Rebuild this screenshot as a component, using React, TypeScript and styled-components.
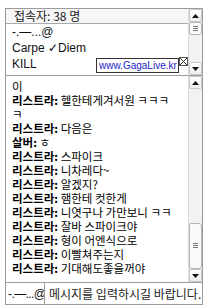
import styled, { createGlobalStyle } from 'styled-components';

const GlobalStyle = createGlobalStyle`
  html, body {
    margin: 0;
    padding: 0;
    background: #ffffff;
  }
  body {
    font-family: 'Noto Sans CJK KR', 'Liberation Sans', sans-serif;
    color: #000;
  }
`;

const Frame = styled.div`
  width: 198px;
  margin: 8px 0 0 5px;
  display: flex;
  flex-direction: column;
`;

const Panel = styled.div<{ $height: number }>`
  position: relative;
  height: ${p => p.$height}px;
  border: 1px solid #9c9c9c;
  display: grid;
  grid-template-columns: 1fr 14px;
  box-sizing: border-box;
  & + & {
    border-top: none;
  }
`;

const UserList = styled.div`
  display: flex;
  flex-direction: column;
  overflow: hidden;
`;

const ListHeader = styled.div`
  height: 14px;
  line-height: 14px;
  padding-left: 8px;
  font-size: 12px;
  color: #222;
  white-space: nowrap;
  background: #f6f6f6;
  border-bottom: 1px solid #a8a8a8;
`;

const UserItem = styled.div`
  height: 16px;
  line-height: 16px;
  padding-left: 6px;
  font-family: 'Liberation Sans', sans-serif;
  font-size: 12px;
  color: #111;
  white-space: nowrap;
  &:first-of-type {
    margin-top: 1px;
    letter-spacing: -0.6px;
  }
`;

const Tooltip = styled.div`
  position: absolute;
  left: 90px;
  top: 49px;
  height: 13px;
  padding: 0 1px 0 2px;
  border: 1px solid #333;
  background: #fff;
  font-family: 'Liberation Sans', sans-serif;
  font-size: 10px;
  line-height: 13px;
  color: #1e1ec8;
  white-space: nowrap;
`;

const CloseBox = styled.span`
  position: absolute;
  right: -10px;
  top: -2px;
  width: 7px;
  height: 7px;
  border: 1px solid #555;
  background: #fff;
  svg {
    display: block;
  }
`;

const ScrollBar = styled.div`
  display: flex;
  flex-direction: column;
  background: #f2f2f0;
  border-left: 1px solid #dcdcdc;
`;

const ArrowButton = styled.div`
  height: 13px;
  flex: none;
  box-sizing: border-box;
  border: 1px solid #c8c8c8;
  border-radius: 2px;
  background: linear-gradient(#ffffff, #eeeeee);
  display: flex;
  align-items: center;
  justify-content: center;
`;

const Thumb = styled.div<{ $height: number }>`
  height: ${p => p.$height}px;
  flex: none;
  box-sizing: border-box;
  border: 1px solid #b4b4b4;
  border-radius: 2px 3px 3px 2px;
  background: #fafafa;
  display: flex;
  align-items: center;
  justify-content: center;
`;

const Track = styled.div`
  flex: 1;
`;

const Grip = styled.div`
  width: 5px;
  height: 6px;
  background: repeating-linear-gradient(#7c7c7c 0 1px, transparent 1px 2px);
`;

const ChatLog = styled.div`
  padding: 3px 0 0 6px;
  font-size: 11.5px;
  line-height: 14px;
  overflow: hidden;
`;

const ChatLine = styled.div`
  white-space: nowrap;
`;

const Name = styled.b`
  font-weight: 700;
`;

const InputBar = styled.div`
  height: 22px;
  border: 1px solid #9c9c9c;
  border-top: none;
  display: flex;
  align-items: center;
  box-sizing: border-box;
`;

const NickField = styled.div`
  width: 36px;
  flex: none;
  padding-left: 2px;
  font-family: 'Liberation Sans', sans-serif;
  font-size: 12px;
  letter-spacing: -0.6px;
  color: #111;
  white-space: nowrap;
  overflow: hidden;
  border-right: 1px solid #9c9c9c;
  height: 100%;
  display: flex;
  align-items: center;
`;

const MessageField = styled.div`
  padding-left: 4px;
  font-size: 12px;
  color: #222;
  white-space: nowrap;
  overflow: hidden;
`;

const Arrow = ({ up }: { up?: boolean }) => (
  <svg width="7" height="4" viewBox="0 0 7 4">
    <path d={up ? 'M0 4 L3.5 0 L7 4 Z' : 'M0 0 L3.5 4 L7 0 Z'} fill="#111" />
  </svg>
);

const Scroll = ({ thumb, top }: { thumb: number; top: boolean }) => (
  <ScrollBar>
    <ArrowButton>
      <Arrow up />
    </ArrowButton>
    {top ? (
      <>
        <Thumb $height={thumb}>
          <Grip />
        </Thumb>
        <Track />
      </>
    ) : (
      <>
        <Track />
        <Thumb $height={thumb}>
          <Grip />
        </Thumb>
      </>
    )}
    <ArrowButton>
      <Arrow />
    </ArrowButton>
  </ScrollBar>
);

const users = ['-.—...@', 'Carpe ✓Diem', 'KILL'];

const chat: [string, string][] = [
  ['', '이'],
  ['리스트라:', '헬한테게겨서원 ㅋㅋㅋ'],
  ['', 'ㅋ'],
  ['리스트라:', '다음은'],
  ['살버:', 'ㅎ'],
  ['리스트라:', '스파이크'],
  ['리스트라:', '니차레다~'],
  ['리스트라:', '알겠지?'],
  ['리스트라:', '햄한테 컷한게'],
  ['리스트라:', '니엿구나 가만보니 ㅋㅋ'],
  ['리스트라:', '잘바 스파이크야'],
  ['리스트라:', '형이 어엔식으로'],
  ['리스트라:', '이빨쳐주는지'],
  ['리스트라:', '기대해도좋을꺼야'],
];

export default function App() {
  return (
    <>
      <GlobalStyle />
      <Frame>
        <Panel $height={68}>
          <UserList>
            <ListHeader>접속자: 38 명</ListHeader>
            {users.map(u => (
              <UserItem key={u}>{u}</UserItem>
            ))}
          </UserList>
          <Scroll thumb={13} top />
          <Tooltip>
            www.GagaLive.kr
            <CloseBox>
              <svg width="7" height="7" viewBox="0 0 7 7">
                <path d="M0 0 L7 7 M7 0 L0 7" stroke="#333" strokeWidth="1" />
              </svg>
            </CloseBox>
          </Tooltip>
        </Panel>
        <Panel $height={207}>
          <ChatLog>
            {chat.map(([name, msg], i) => (
              <ChatLine key={i}>
                {name && <Name>{name} </Name>}
                {msg}
              </ChatLine>
            ))}
          </ChatLog>
          <Scroll thumb={46} top={false} />
        </Panel>
        <InputBar>
          <NickField>-.—...@</NickField>
          <MessageField>메시지를 입력하시길 바랍니다.</MessageField>
        </InputBar>
      </Frame>
    </>
  );
}
